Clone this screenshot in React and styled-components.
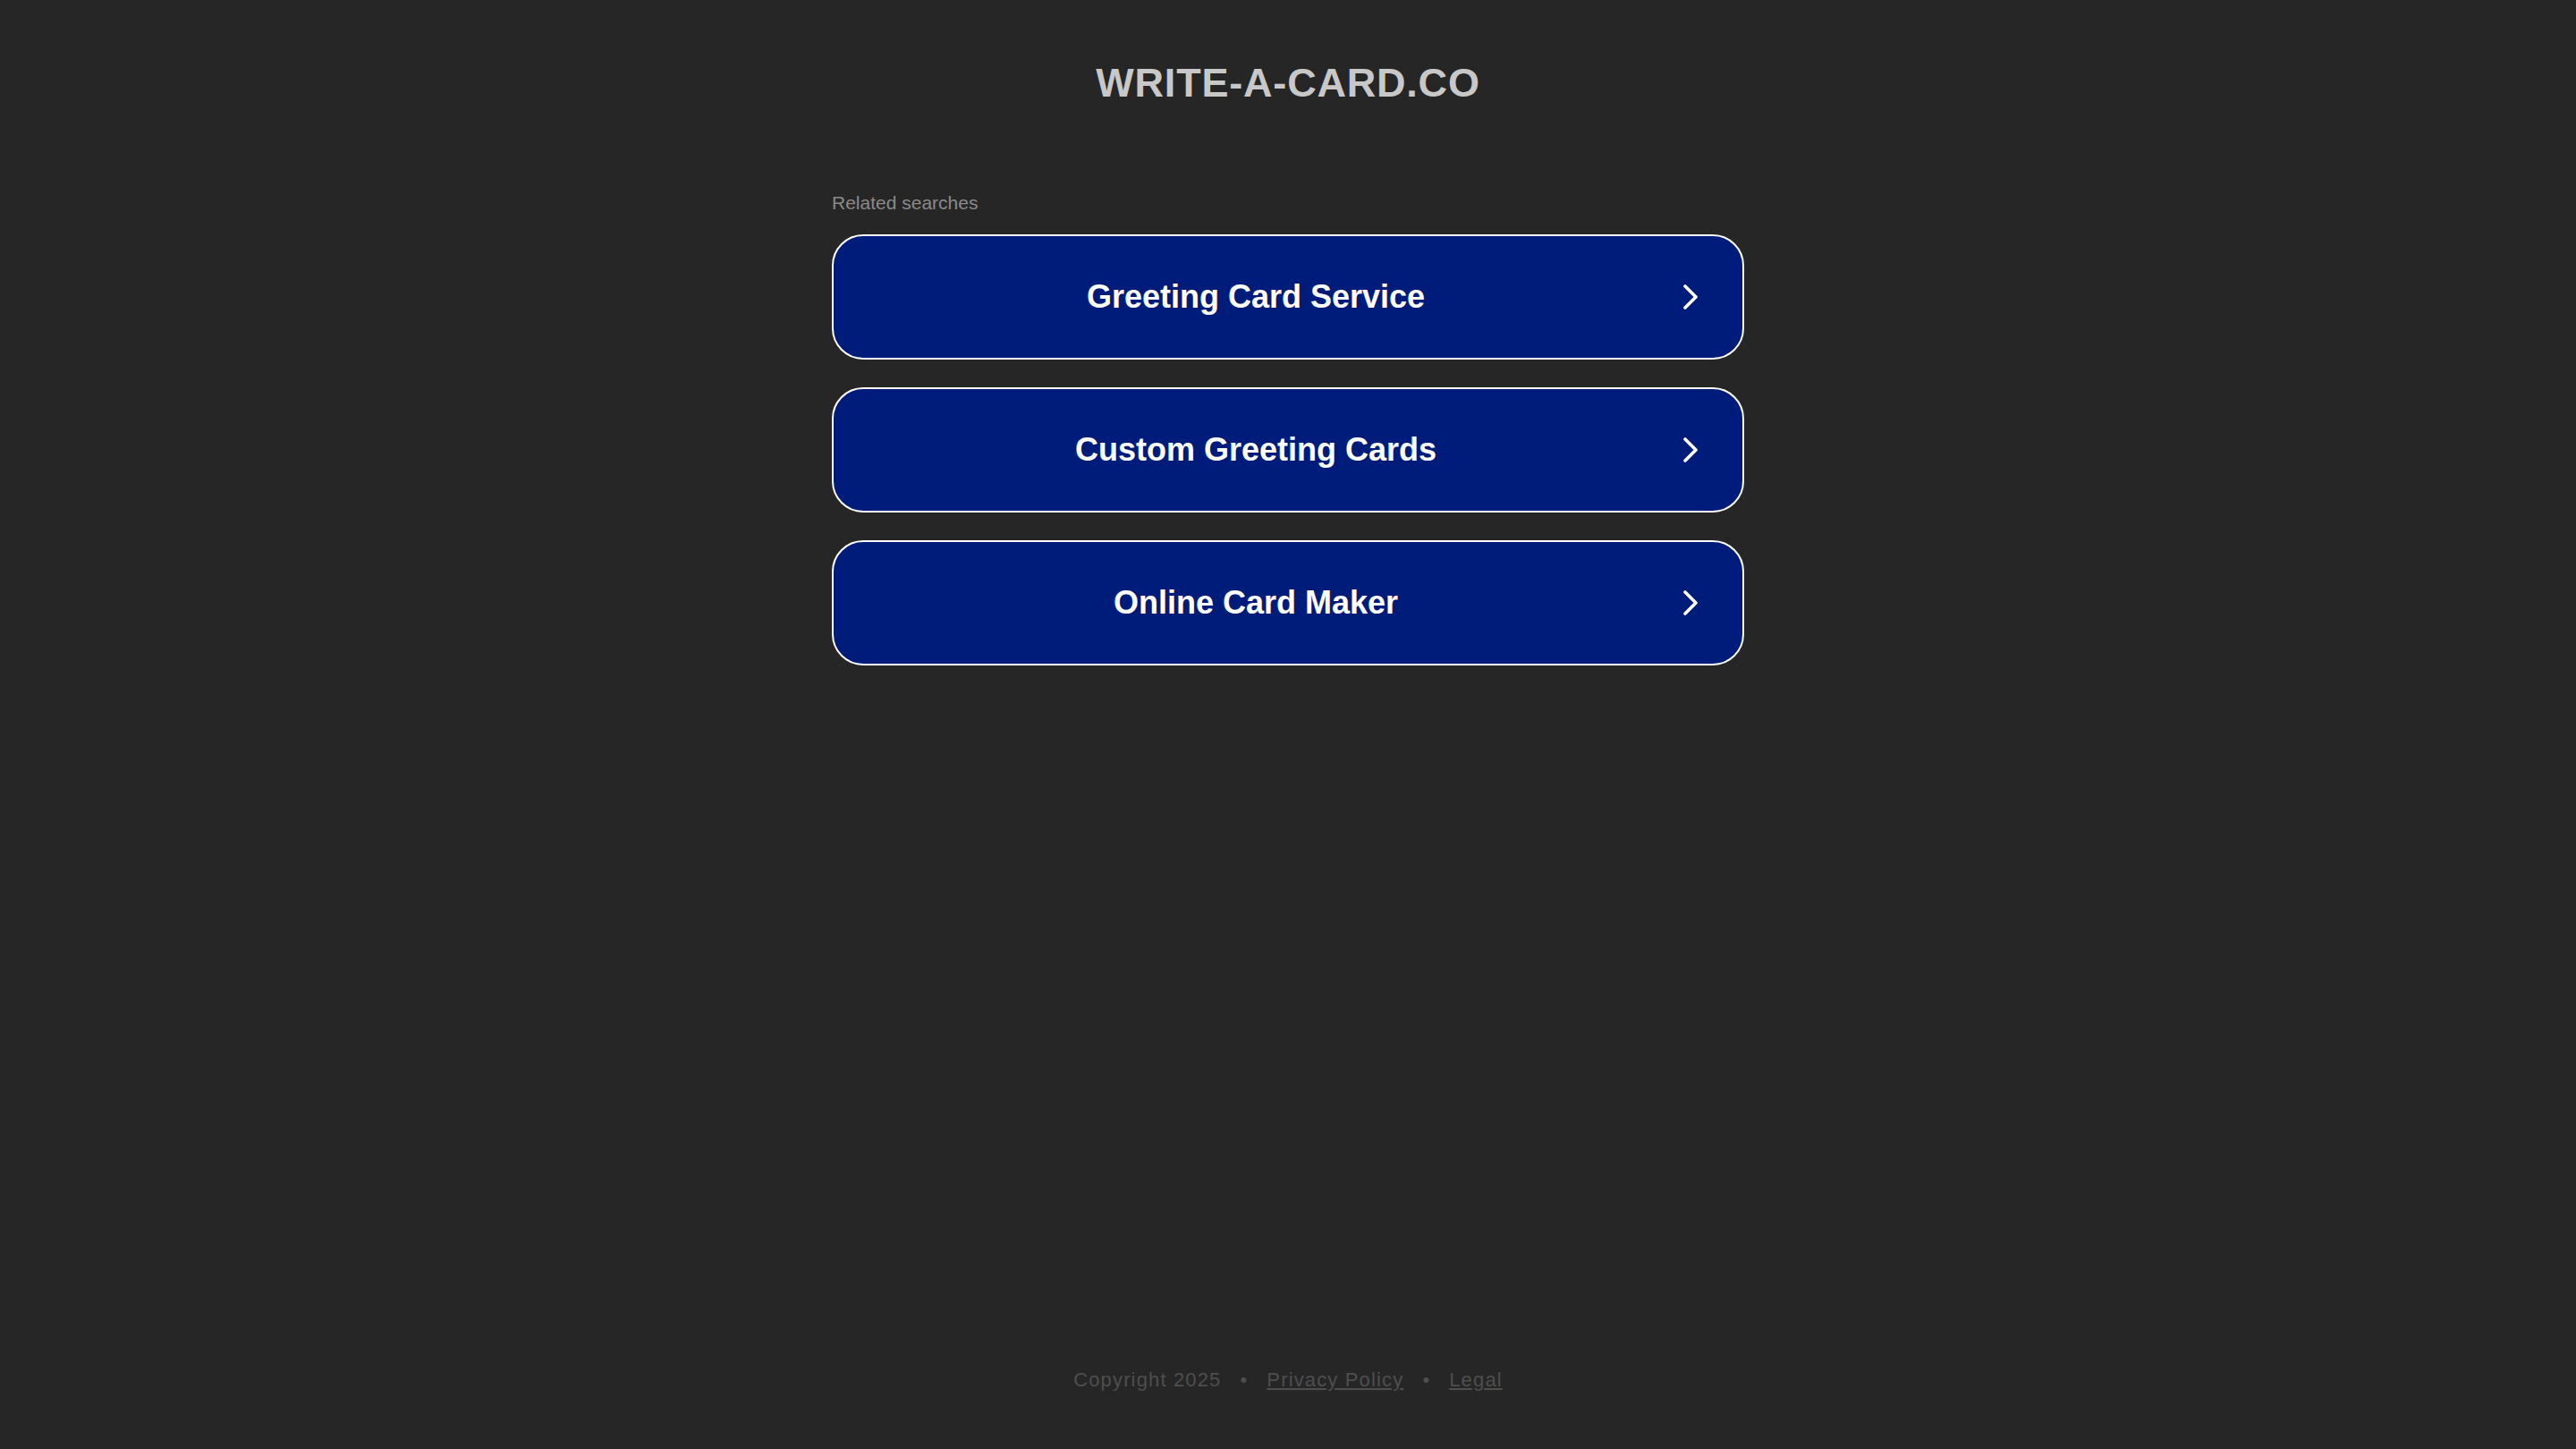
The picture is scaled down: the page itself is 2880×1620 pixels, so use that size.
import styled, { createGlobalStyle } from 'styled-components'

const searches = [
  'Greeting Card Service',
  'Custom Greeting Cards',
  'Online Card Maker',
]

const GlobalStyle = createGlobalStyle`
  html, body {
    margin: 0;
    padding: 0;
    background: #262626;
  }
  body {
    font-family: "Liberation Sans", Arial, Helvetica, sans-serif;
  }
`

const Page = styled.div`
  min-height: 100vh;
  display: flex;
  flex-direction: column;
  align-items: center;
  box-sizing: border-box;
  padding: 70px 0 66px;
`

const Domain = styled.h1`
  margin: 0;
  font-size: 45px;
  line-height: 1;
  font-weight: 700;
  letter-spacing: 0.8px;
  color: #c8c8c8;
`

const Results = styled.section`
  width: 1020px;
  margin-top: 101px;
  display: flex;
  flex-direction: column;
`

const Caption = styled.div`
  font-size: 21px;
  line-height: 1;
  color: #8a8a8a;
  margin-bottom: 25px;
`

const List = styled.div`
  display: flex;
  flex-direction: column;
  gap: 31px;
`

const SearchLink = styled.a`
  display: flex;
  align-items: center;
  height: 140px;
  box-sizing: border-box;
  border: 2px solid #ffffff;
  border-radius: 35px;
  background: #001c7a;
  color: #ffffff;
  text-decoration: none;
  padding: 0 50px 0 0;
  gap: 6px;
  cursor: pointer;
`

const Label = styled.span`
  flex: 1;
  text-align: center;
  font-size: 36px;
  font-weight: 700;
`

const Footer = styled.footer`
  margin-top: auto;
  display: flex;
  align-items: center;
  font-size: 22px;
  line-height: 1;
  letter-spacing: 1.15px;
  color: #4e4e4e;
`

const Dot = styled.span`
  margin: 0 21px;
`

const FooterLink = styled.a`
  color: inherit;
  text-decoration: underline;
`

const Chevron = () => (
  <svg width="16" height="28" viewBox="0 0 16 28" fill="none">
    <polyline
      points="2,2 14,14 2,26"
      stroke="#ffffff"
      strokeWidth="3.6"
      strokeLinecap="round"
      strokeLinejoin="round"
    />
  </svg>
)

export default function App() {
  return (
    <>
      <GlobalStyle />
      <Page>
        <Domain>WRITE-A-CARD.CO</Domain>
        <Results>
          <Caption>Related searches</Caption>
          <List>
            {searches.map((s) => (
              <SearchLink key={s}>
                <Label>{s}</Label>
                <Chevron />
              </SearchLink>
            ))}
          </List>
        </Results>
        <Footer>
          <span>Copyright 2025</span>
          <Dot>•</Dot>
          <FooterLink>Privacy Policy</FooterLink>
          <Dot>•</Dot>
          <FooterLink>Legal</FooterLink>
        </Footer>
      </Page>
    </>
  )
}
